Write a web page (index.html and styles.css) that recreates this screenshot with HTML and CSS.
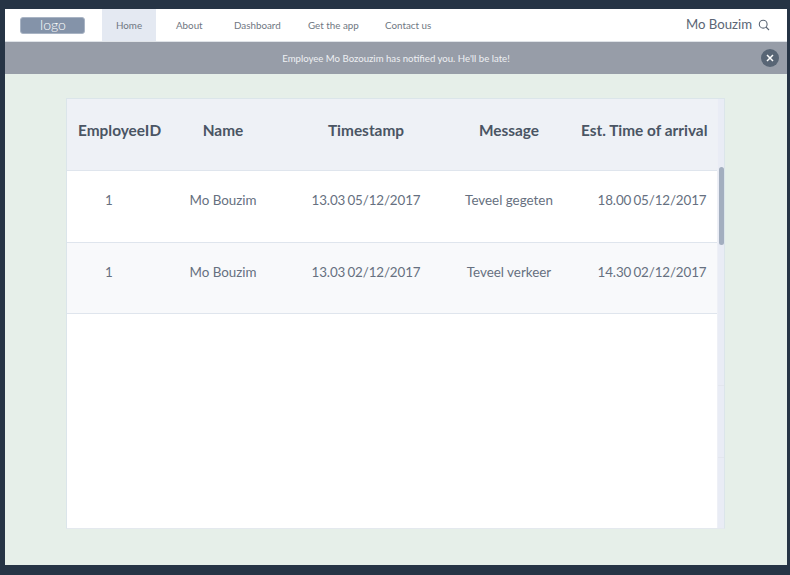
FILE: index.html
```html
<!DOCTYPE html>
<html lang="en">
<head>
    <meta charset="UTF-8">
    <title>Employee notifications</title>
    <link rel="stylesheet" href="styles.css">
</head>
<body>
    <div class="frame">
        <header class="nav">
            <div class="logo">logo</div>
            <a class="nav-link active home">Home</a>
            <a class="nav-link about">About</a>
            <a class="nav-link dashboard">Dashboard</a>
            <a class="nav-link app">Get the app</a>
            <a class="nav-link contact">Contact us</a>
            <div class="user">Mo Bouzim</div>
            <svg class="search-icon" width="12" height="12" viewBox="0 0 12 12" fill="none" stroke="#5b6675" stroke-width="1.1">
                <circle cx="5.2" cy="5.2" r="3.9"/>
                <path d="M8 8l3 3"/>
            </svg>
        </header>
        <div class="banner">
            <span class="banner-text">Employee Mo Bozouzim has notified you. He'll be late!</span>
            <span class="close">
                <svg width="8" height="8" viewBox="0 0 8 8" stroke="#fff" stroke-width="1.5">
                    <path d="M1 1l6 6M7 1l-6 6"/>
                </svg>
            </span>
        </div>
        <main class="content">
            <div class="panel">
                <div class="table">
                    <div class="row head">
                        <div class="id-head">EmployeeID</div>
                        <div>Name</div>
                        <div>Timestamp</div>
                        <div>Message</div>
                        <div>Est. Time of arrival</div>
                    </div>
                    <div class="row">
                        <div>1</div>
                        <div>Mo Bouzim</div>
                        <div class="date">13.03 05/12/2017</div>
                        <div>Teveel gegeten</div>
                        <div class="date eta">18.00 05/12/2017</div>
                    </div>
                    <div class="row alt">
                        <div>1</div>
                        <div>Mo Bouzim</div>
                        <div class="date">13.03 02/12/2017</div>
                        <div>Teveel verkeer</div>
                        <div class="date eta">14.30 02/12/2017</div>
                    </div>
                </div>
                <div class="scrollbar">
                    <div class="thumb"></div>
                    <div class="tick first"></div>
                    <div class="tick second"></div>
                </div>
            </div>
        </main>
    </div>
</body>
</html>
```

FILE: styles.css
```css
* {
    box-sizing: border-box;
}

html, body {
    height: 100%;
}

body {
    margin: 0;
    background-color: #263445;
    font-family: "Lato", "Open Sans", sans-serif;
    color: #4a5564;
    overflow: hidden;
}

.frame {
    width: 782px;
    height: 555px;
    margin: 9px 0 0 5px;
    display: flex;
    flex-direction: column;
}

.nav {
    height: 33px;
    flex: none;
    display: flex;
    align-items: center;
    background-color: #fff;
    border-bottom: 1px solid #dfe3e8;
}

.logo {
    width: 65px;
    height: 17px;
    margin-left: 15px;
    padding-left: 1px;
    background-color: #8493a9;
    border: 1px solid #a9b4c4;
    border-radius: 3px;
    color: #fff;
    font-size: 14px;
    font-weight: 300;
    line-height: 13px;
    text-align: center;
}

.nav-link {
    height: 32px;
    font-size: 9.8px;
    line-height: 32px;
    color: #6f7782;
    white-space: nowrap;
}

.home {
    width: 54px;
    margin-left: 17px;
    margin-right: 20px;
    text-align: center;
    background-color: #e4e9f2;
}

.about {
    width: 58px;
}

.dashboard {
    width: 74px;
}

.app {
    width: 77px;
}

.user {
    margin-left: auto;
    font-size: 13.2px;
    padding-bottom: 2px;
    color: #5b6675;
}

.search-icon {
    margin: 0 17px 0 6px;
}

.banner {
    height: 32px;
    flex: none;
    display: flex;
    align-items: center;
    justify-content: center;
    position: relative;
    background-color: #979da8;
    color: #eef0f3;
    font-size: 9.6px;
}

.close {
    position: absolute;
    top: 7px;
    right: 8px;
    width: 18px;
    height: 18px;
    border-radius: 50%;
    background-color: #586575;
    display: flex;
    align-items: center;
    justify-content: center;
}

.content {
    flex: 1;
    padding: 24px 62px 36px 61px;
    background-color: #e6efe9;
}

.panel {
    height: 431px;
    display: flex;
    background-color: #fff;
    border: 1px solid #dbe5ea;
    border-bottom-color: #e4e9ee;
}

.table {
    width: 650px;
    flex: none;
}

.row {
    height: 71.5px;
    display: grid;
    grid-template-columns: 84px 144px 142px 144px 126px;
    align-items: center;
    text-align: center;
    font-size: 13.4px;
    color: #667080;
    border-bottom: 1px solid #dfe5ed;
    white-space: nowrap;
}

.row > div {
    padding-bottom: 12px;
}

.date {
    word-spacing: -1px;
    letter-spacing: -0.13px;
}

.eta {
    margin-left: 16px;
}

.head {
    height: 72px;
    background-color: #eef1f6;
    font-size: 15.4px;
    font-weight: 700;
    color: #4a5564;
}

.head > div {
    padding-bottom: 10px;
}

.head .id-head {
    padding-left: 11px;
}

.alt {
    background-color: #f8f9fb;
}

.scrollbar {
    flex: 1;
    position: relative;
    background-color: #e9ecf5;
    border-left: 1px solid #eef0f6;
}

.thumb {
    position: absolute;
    top: 68px;
    left: 1px;
    width: 5px;
    height: 78px;
    border-radius: 3px;
    background-color: #a3aebf;
}

.tick {
    position: absolute;
    left: 0;
    right: 0;
    height: 1px;
    background-color: #e3e6ee;
}

.first {
    top: 286px;
}

.second {
    top: 358px;
}
```
